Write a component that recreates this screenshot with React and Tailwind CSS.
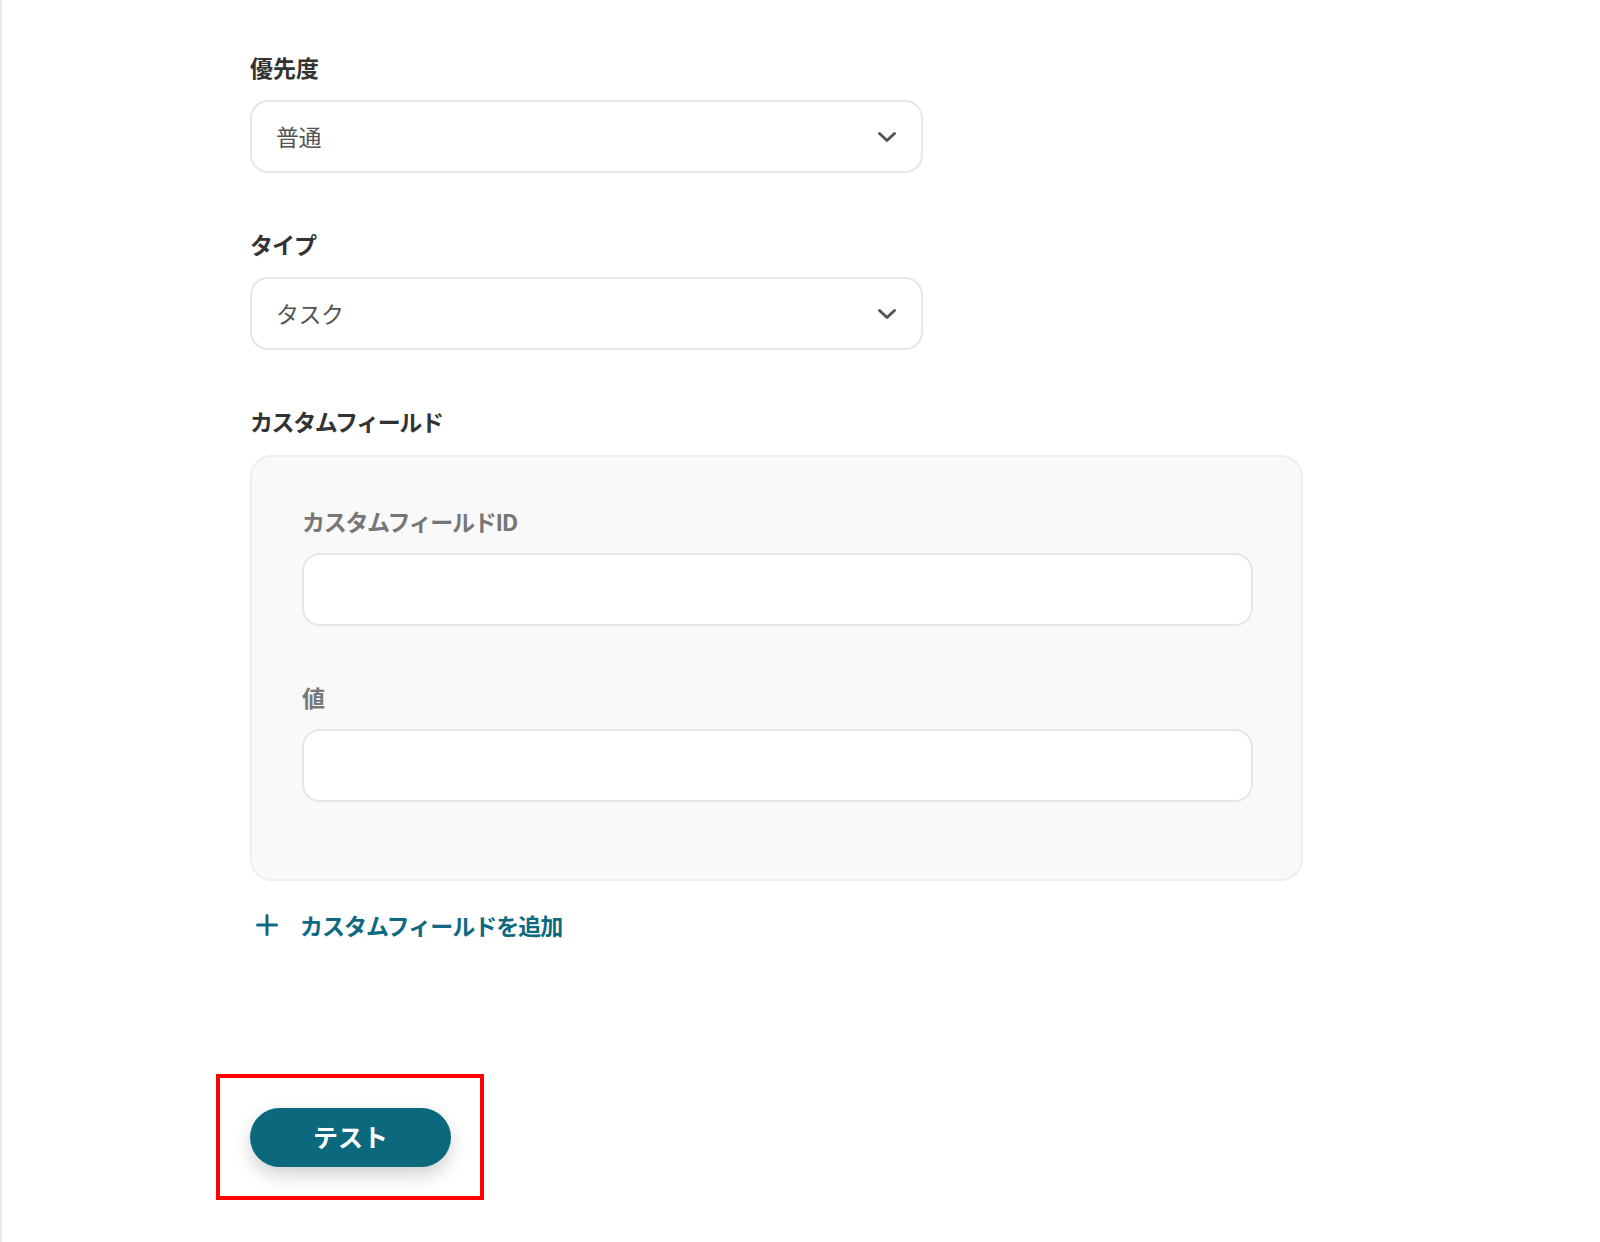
import { useState } from "react"

const font = { fontFamily: "'Noto Sans CJK JP', 'Noto Sans', sans-serif" }

function Chevron() {
  return (
    <svg className="w-[20px] h-[12px] text-[#555]" viewBox="0 0 20 12" fill="none" stroke="currentColor">
      <path d="M2.5 2.5l7.5 7 7.5-7" strokeWidth={3} strokeLinecap="round" strokeLinejoin="round" />
    </svg>
  )
}

function SelectBox({ value }) {
  return (
    <div className="w-[673px] h-[73px] bg-white border-2 border-[#e4e7eb] rounded-[18px] flex items-center justify-between pl-[24px] pr-[24px]">
      <span className="text-[23px] text-[#555] tracking-[-0.5px]">{value}</span>
      <Chevron />
    </div>
  )
}

function TextInput() {
  const [v, setV] = useState("")
  return (
    <input
      value={v}
      onChange={(e) => setV(e.target.value)}
      className="w-[951px] h-[73px] bg-white border-2 border-[#e4e7eb] rounded-[18px] px-[22px] text-[22px] outline-none"
    />
  )
}

export default function App() {
  return (
    <div className="min-h-[1242px] bg-white border-l-2 border-[#e9e9e9]" style={font}>
      <div className="pl-[248px] pt-[53px] flex flex-col">
        <h3 className="text-[23px] font-bold text-[#333] leading-[28px]">優先度</h3>
        <div className="mt-[19px]">
          <SelectBox value="普通" />
        </div>

        <h3 className="mt-[57px] text-[23px] font-bold text-[#333] leading-[28px] tracking-[-1px]">タイプ</h3>
        <div className="mt-[19px]">
          <SelectBox value="タスク" />
        </div>

        <h3 className="mt-[57px] text-[23px] font-bold text-[#333] leading-[28px] tracking-[-1.4px]">カスタムフィールド</h3>
        <div className="mt-[20px] w-[1053px] bg-[#f9f9f9] border-2 border-[#efefef] rounded-[22px] pl-[50px] pt-[50px] pb-[77px]">
          <label className="block text-[23px] font-bold text-[#777] leading-[28px] tracking-[-1.3px]">カスタムフィールドID</label>
          <div className="mt-[18px]">
            <TextInput />
          </div>
          <label className="block mt-[57px] text-[23px] font-bold text-[#777] leading-[28px]">値</label>
          <div className="mt-[18px]">
            <TextInput />
          </div>
        </div>

        <button className="mt-[30px] flex items-center gap-[22px] text-[#0e6a80] self-start">
          <svg className="w-[22px] h-[22px] ml-[6px]" viewBox="0 0 22 22" fill="none" stroke="currentColor">
            <path d="M11 1.5v19M1.5 11h19" strokeWidth={3} strokeLinecap="round" />
          </svg>
          <span className="text-[23px] font-bold leading-[28px] tracking-[-1px]">カスタムフィールドを追加</span>
        </button>

        <div className="mt-[135px] -ml-[34px] w-[268px] h-[126px] border-4 border-[#ff0000] flex items-center pl-[30px]">
          <button className="w-[201px] h-[59px] rounded-full bg-[#0b687d] text-white text-[25px] font-bold shadow-[0_8px_18px_rgba(0,0,0,0.18)]">
            テスト
          </button>
        </div>
      </div>
    </div>
  )
}
